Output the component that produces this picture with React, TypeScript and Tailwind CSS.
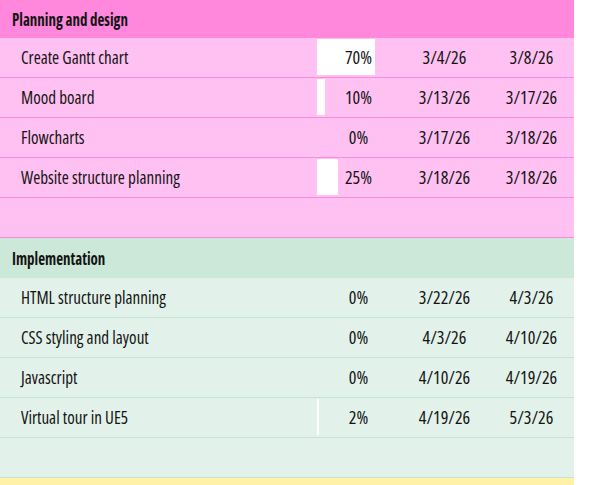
type Task = { name: string; pct: number; start: string; end: string };

const planning: Task[] = [
  { name: "Create Gantt chart", pct: 70, start: "3/4/26", end: "3/8/26" },
  { name: "Mood board", pct: 10, start: "3/13/26", end: "3/17/26" },
  { name: "Flowcharts", pct: 0, start: "3/17/26", end: "3/18/26" },
  { name: "Website structure planning", pct: 25, start: "3/18/26", end: "3/18/26" },
];

const implementation: Task[] = [
  { name: "HTML structure planning", pct: 0, start: "3/22/26", end: "4/3/26" },
  { name: "CSS styling and layout", pct: 0, start: "4/3/26", end: "4/10/26" },
  { name: "Javascript", pct: 0, start: "4/10/26", end: "4/19/26" },
  { name: "Virtual tour in UE5", pct: 2, start: "4/19/26", end: "5/3/26" },
];

function Row({ t, border }: { t?: Task; border: string }) {
  return (
    <div className={`flex h-[40px] items-center border-b ${border}`}>
      <div className="w-[317px] whitespace-nowrap pl-[21px]">
        <span className="inline-block origin-left scale-x-[0.95]">{t?.name}</span>
      </div>
      <div className="relative flex h-full w-[83px] items-center justify-center">
        {t && t.pct > 0 && (
          <div
            className="absolute left-0 top-[1px] h-[36px] bg-white"
            style={{ width: `${(t.pct / 100) * 83}px` }}
          />
        )}
        <span className="relative">{t ? `${t.pct}%` : ""}</span>
      </div>
      <div className="w-[89px] text-center">{t?.start}</div>
      <div className="w-[85px] text-center">{t?.end}</div>
    </div>
  );
}

export default function App() {
  return (
    <div className="h-[485px] w-[589px] overflow-hidden bg-white font-['Open_Sans',sans-serif] text-[18px] text-[#141414] [font-stretch:75%]">
      <div className="w-[574px]">
        <div className="bg-[#ffc1f2]">
          <div className="flex h-[38px] items-center whitespace-nowrap bg-[#ff88dc] pl-[12px] font-bold">
            <span className="inline-block origin-left scale-x-[0.83]">Planning and design</span>
          </div>
          {planning.map((t) => (
            <Row key={t.name} t={t} border="border-[#ff88dc]" />
          ))}
          <Row border="border-[#ff88dc]" />
        </div>
        <div className="bg-[#e2f2ea]">
          <div className="flex h-[40px] items-center whitespace-nowrap bg-[#cce8d8] pl-[12px] font-bold">
            <span className="inline-block origin-left scale-x-[0.83]">Implementation</span>
          </div>
          {implementation.map((t) => (
            <Row key={t.name} t={t} border="border-[#c6e4d6]" />
          ))}
          <Row border="border-[#c6e4d6]" />
        </div>
        <div className="h-[20px] bg-[#fff2a8]" />
      </div>
    </div>
  );
}
